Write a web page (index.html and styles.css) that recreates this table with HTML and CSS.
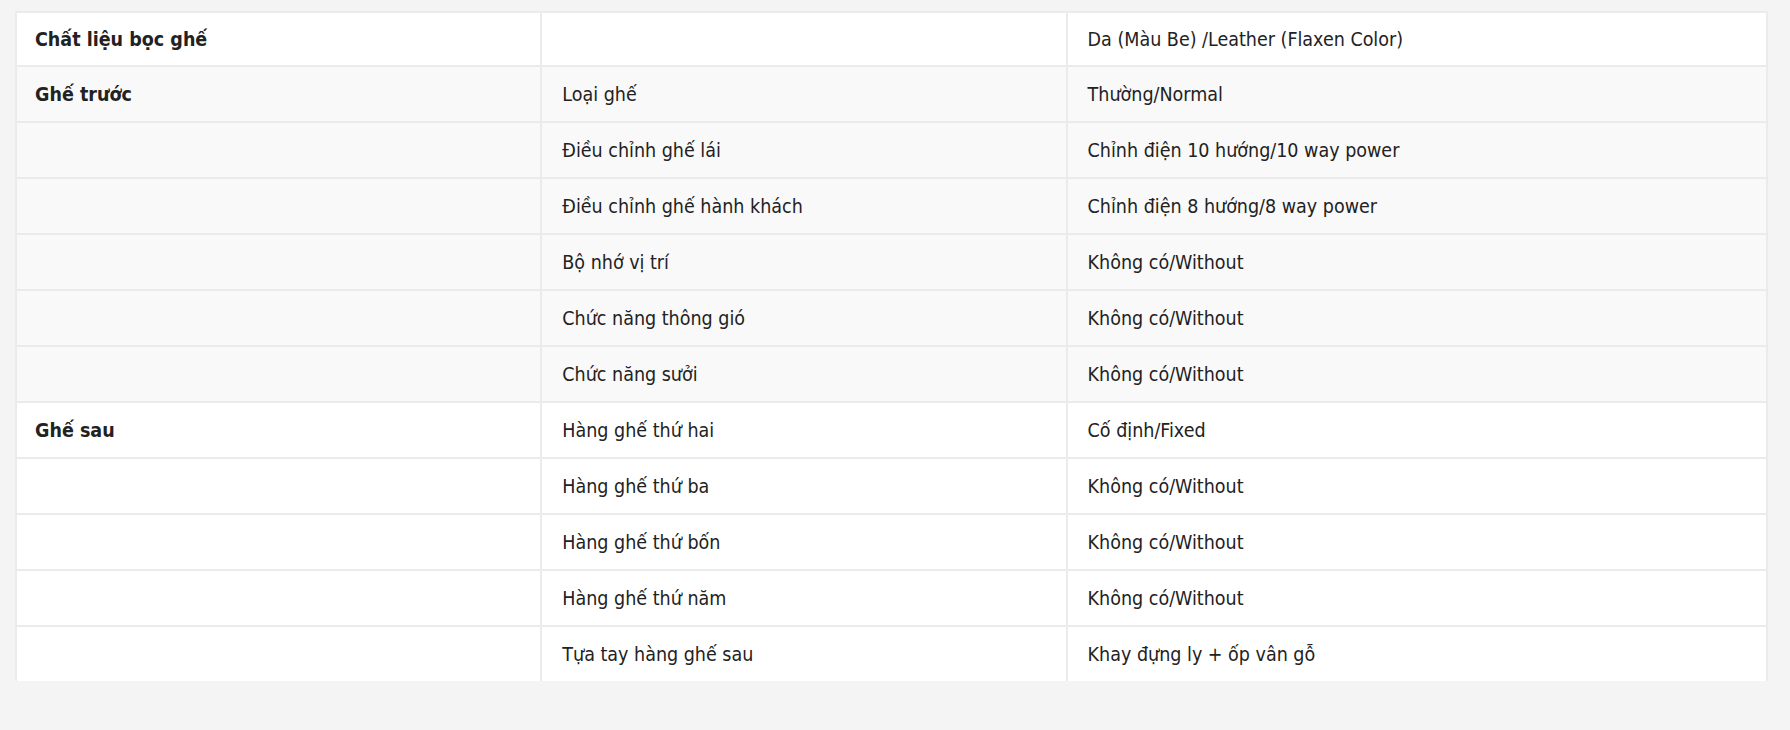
FILE: index.html
```html
<!DOCTYPE html>
<html lang="vi">
<head>
<meta charset="utf-8">
<title>Thông số ghế</title>
<link rel="stylesheet" href="styles.css">
</head>
<body>
<div class="spec-wrap">
  <table class="spec">
    <colgroup><col class="c1"><col class="c2"><col class="c3"></colgroup>
    <tbody class="grp-white">
      <tr class="first"><th>Chất liệu bọc ghế</th><td></td><td>Da (Màu Be) /Leather (Flaxen Color)</td></tr>
    </tbody>
    <tbody class="grp-gray">
      <tr><th>Ghế trước</th><td>Loại ghế</td><td>Thường/Normal</td></tr>
      <tr><th></th><td>Điều chỉnh ghế lái</td><td>Chỉnh điện 10 hướng/10 way power</td></tr>
      <tr><th></th><td>Điều chỉnh ghế hành khách</td><td>Chỉnh điện 8 hướng/8 way power</td></tr>
      <tr><th></th><td>Bộ nhớ vị trí</td><td>Không có/Without</td></tr>
      <tr><th></th><td>Chức năng thông gió</td><td>Không có/Without</td></tr>
      <tr><th></th><td>Chức năng sưởi</td><td>Không có/Without</td></tr>
    </tbody>
    <tbody class="grp-white">
      <tr><th>Ghế sau</th><td>Hàng ghế thứ hai</td><td>Cố định/Fixed</td></tr>
      <tr><th></th><td>Hàng ghế thứ ba</td><td>Không có/Without</td></tr>
      <tr><th></th><td>Hàng ghế thứ bốn</td><td>Không có/Without</td></tr>
      <tr><th></th><td>Hàng ghế thứ năm</td><td>Không có/Without</td></tr>
      <tr><th></th><td>Tựa tay hàng ghế sau</td><td>Khay đựng ly + ốp vân gỗ</td></tr>
    </tbody>
  </table>
</div>
</body>
</html>
```
FILE: styles.css
```css
html, body {
  margin: 0;
  background: #f4f4f4;
}
body {
  padding: 11px 22px 0 15px;
  font-family: "DejaVu Sans Condensed", "DejaVu Sans", sans-serif;
  color: #222;
}
.spec-wrap {
  height: 670px;
  overflow: hidden;
}
.spec {
  width: 100%;
  border-collapse: collapse;
  table-layout: fixed;
  font-size: 19.5px;
}
.c1 { width: 30%; }
.c2 { width: 30%; }
.c3 { width: 40%; }
.spec th,
.spec td {
  border: 2px solid #ebebeb;
  box-sizing: border-box;
  padding: 0 20px;
  text-align: left;
  vertical-align: middle;
  font-weight: normal;
}
.spec th {
  font-weight: bold;
  padding-left: 18px;
}
.spec tr { height: 56px; }
.spec tr.first { height: 54px; }
.grp-white tr { background: #fff; }
.grp-gray tr { background: #f9f9f9; }
```
